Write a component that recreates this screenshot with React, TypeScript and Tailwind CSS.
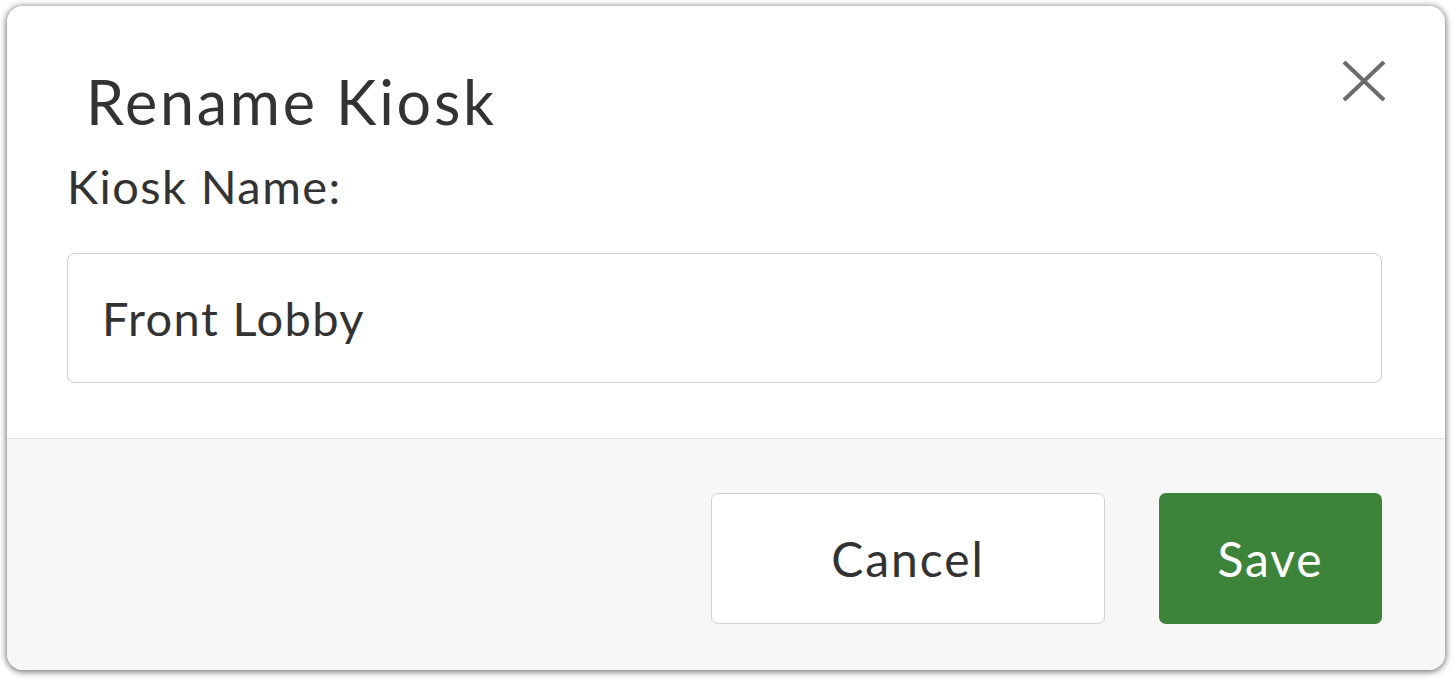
import { X } from 'lucide-react';

/**
 * Rename Kiosk dialog — single modal that fills the viewport.
 */

export default function App() {
  return (
    <div className="w-[1453px] h-[679px] bg-white pt-[6px] pl-[7px] pr-[8px] pb-[9px] font-['Lato','Open_Sans',sans-serif] text-[#333]">
      <div className="relative w-full h-full rounded-[16px] overflow-hidden bg-white shadow-[0_1px_6px_1px_rgba(0,0,0,0.55)] flex flex-col">
        {/* Header */}
        <div className="bg-white pl-[60px] pr-[63px] pt-[60px] pb-[55px] border-b border-[#e5e5e5]">
          <h2 className="pl-[19px] text-[61px] leading-[72px] tracking-[0.045em] font-normal text-[#333]">
            Rename Kiosk
          </h2>
          <label className="block mt-[21px] text-[47px] leading-[55px] tracking-[0.03em] text-[#333]">
            Kiosk Name:
          </label>
          <input
            defaultValue="Front Lobby"
            className="mt-[39px] w-full h-[130px] rounded-[8px] border border-[#cfcfcf] bg-white px-[34px] text-[47px] tracking-[0.03em] text-[#333] outline-none"
          />
        </div>

        {/* Close */}
        <button className="absolute top-[53px] right-[58px] w-[46px] h-[44px] flex items-center justify-center text-[#6b6b6b]">
          <svg width="44" height="42" viewBox="0 0 44 42" fill="none" stroke="currentColor" strokeWidth="4" strokeLinecap="butt">
            <line x1="2" y1="2" x2="42" y2="40" />
            <line x1="42" y1="2" x2="2" y2="40" />
          </svg>
        </button>

        {/* Footer */}
        <div className="flex-1 bg-[#f7f7f7] flex justify-end items-start gap-[54px] pt-[54px] pr-[63px]">
          <button className="w-[394px] h-[131px] rounded-[7px] border border-[#d2d2d2] bg-white text-[48px] tracking-[0.04em] text-[#333]">
            Cancel
          </button>
          <button className="w-[223px] h-[131px] rounded-[7px] bg-[#3d843a] text-[48px] tracking-[0.04em] text-white">
            Save
          </button>
        </div>
      </div>
    </div>
  );
}
